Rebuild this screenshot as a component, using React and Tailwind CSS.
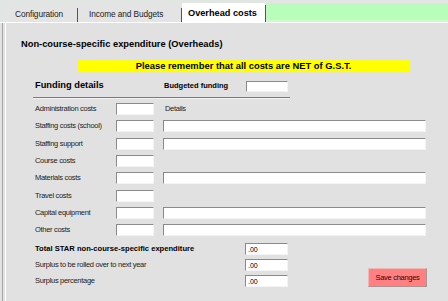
import React from "react";

function Box({ w, h = "h-[12px]", children }) {
  return (
    <div
      className={`${w} ${h} shrink-0 bg-white border-t border-l border-[#8a8a8a] border-r border-b border-r-[#f4f4f4] border-b-[#f4f4f4] flex items-center pl-[2px] text-[7px] leading-none`}
    >
      {children}
    </div>
  );
}

const rows = [
  { label: "Administration costs", detail: "text" },
  { label: "Staffing costs (school)", detail: "input" },
  { label: "Staffing support", detail: "input" },
  { label: "Course costs" },
  { label: "Materials costs", detail: "input" },
  { label: "Travel costs" },
  { label: "Capital equipment", detail: "input" },
  { label: "Other costs", detail: "input" },
];
const gaps = ["mt-[4px]", "mt-[5px]", "mt-[6px]", "mt-[5px]", "mt-[5px]", "mt-[6px]", "mt-[5px]", "mt-[5px]"];

export default function App() {
  return (
    <div className="w-[448px] h-[301px] bg-[#e1e1e1] overflow-hidden font-['Liberation_Sans',Arial,sans-serif] text-black">
      {/* tab strip */}
      <div className="flex h-[22px] bg-[#e2e6e2]">
        <div className="w-[5px]" />
        <div className="mt-[4px] flex h-[18px] bg-[#e4e4e4] text-[8.3px] tracking-[-0.1px] text-[#222]">
          <div className="w-[72px] pl-[10px] pt-[3px] flex items-center">Configuration</div>
          <div className="w-px mt-[4px] bg-[#555]" />
          <div className="w-[103px] pl-[11px] pt-[3px] flex items-center">Income and Budgets</div>
          <div className="w-px mt-[4px] bg-[#555]" />
        </div>
        <div className="mt-[3px] h-[19px] w-[83px] bg-white pl-[6px] pt-[2px] flex items-center text-[9.2px] font-bold">
          Overhead costs
        </div>
        <div className="mt-[5px] h-[17px] w-px bg-[#555]" />
        <div className="flex-1 mt-[3px] h-[18px] bg-[#b9fdbb] border-b border-[#d6f7d6]" />
      </div>
      <div className="h-px bg-white" />

      {/* panel */}
      <div className="flex h-[278px]">
        <div className="w-[2px]" />
        <div className="w-px bg-[#a6a6a6]" />
        <div className="w-[2px]" />
        <div className="w-px bg-white" />
        <div className="flex-1 flex flex-col">
          <div className="mt-[15px] h-[13px] pl-[15px] flex items-center text-[9.3px] font-bold">
            Non-course-specific expenditure (Overheads)
          </div>
          <div className="mt-[9px] ml-[72px] w-[331px] h-[12px] bg-[#ffff00] flex items-center justify-center text-[9.4px] font-bold">
            Please remember that all costs are NET of G.S.T.
          </div>
          <div className="mt-[8px] h-[12px] flex items-center pl-[29px]">
            <div className="w-[129px] text-[9.3px] font-bold">Funding details</div>
            <div className="w-[82px] text-[7.5px] font-bold">Budgeted funding</div>
            <Box w="w-[42px]" h="h-[11px]" />
          </div>
          <div className="mt-[5px] ml-[27px] w-[257px] h-px bg-[#7a7a7a]" />
          <div className="ml-[27px] w-[257px] h-px bg-[#f2f2f2]" />

          {rows.map((r, i) => (
            <div key={r.label} className={`${gaps[i]} h-[12px] flex items-center pl-[29px]`}>
              <div className="w-[81px] text-[7.5px] tracking-[-0.3px] text-[#222] -mt-[1px]">{r.label}</div>
              <Box w="w-[38px]" />
              {r.detail === "input" && (
                <div className="ml-[9px]">
                  <Box w="w-[263px]" />
                </div>
              )}
              {r.detail === "text" && (
                <div className="ml-[11px] text-[7.5px] tracking-[-0.3px] text-[#222] -mt-[1px]">Details</div>
              )}
            </div>
          ))}

          <div className="mt-[7px] flex">
            <div className="flex flex-col">
              <div className="h-[12px] flex items-center pl-[29px]">
                <div className="w-[210px] text-[7.6px] font-bold -mt-[1px]">Total STAR non-course-specific expenditure</div>
                <Box w="w-[43px]">.00</Box>
              </div>
              <div className="mt-[4px] h-[12px] flex items-center pl-[29px]">
                <div className="w-[210px] text-[7.5px] tracking-[-0.3px] text-[#222] -mt-[1px]">Surplus to be rolled over to next year</div>
                <Box w="w-[43px]">.00</Box>
              </div>
              <div className="mt-[4px] h-[12px] flex items-center pl-[29px]">
                <div className="w-[210px] text-[7.5px] tracking-[-0.3px] text-[#222] -mt-[1px]">Surplus percentage</div>
                <Box w="w-[43px]">.00</Box>
              </div>
            </div>
            <button className="self-end ml-[80px] w-[59px] h-[19px] bg-[#ff8080] border border-t-[#ffb0b0] border-l-[#ffb0b0] border-r-[#9a9a9a] border-b-[#9a9a9a] text-[7.5px] tracking-[-0.3px] text-[#3a0000] flex items-center justify-center">
              Save changes
            </button>
          </div>
        </div>
      </div>
    </div>
  );
}
